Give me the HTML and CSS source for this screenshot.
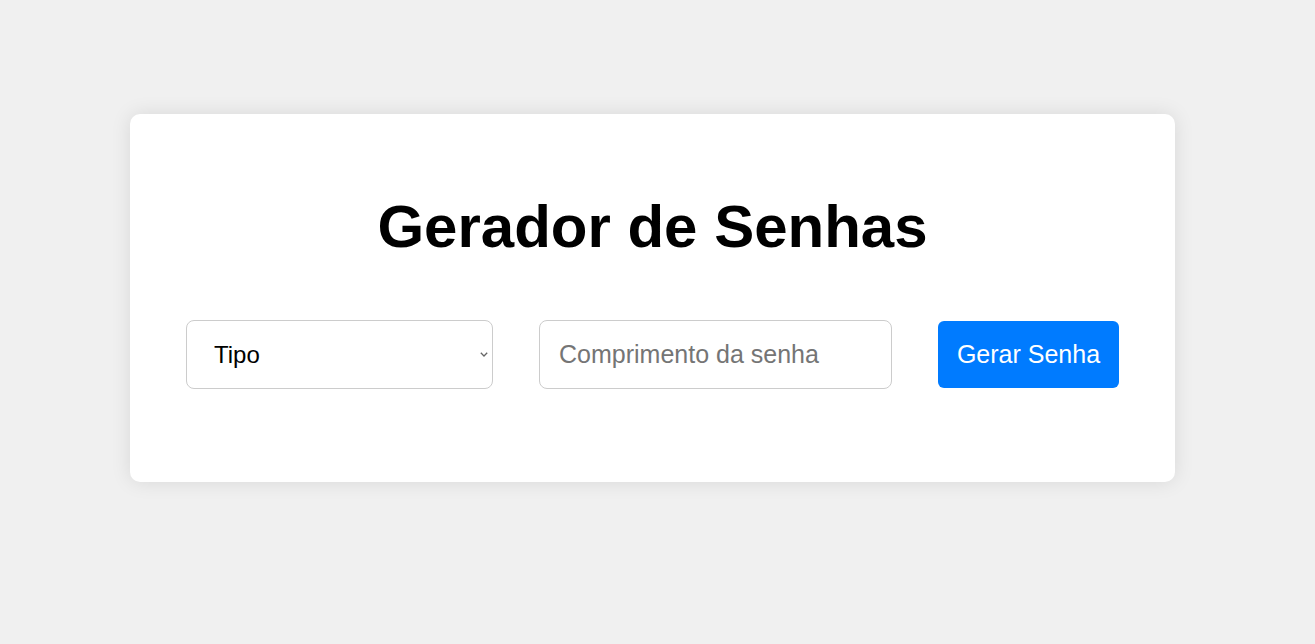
FILE: index.html
```html
<!DOCTYPE html>
<html lang="pt">
<head>
<meta charset="utf-8">
<title>Gerador de Senhas</title>
<link rel="stylesheet" href="styles.css">
</head>
<body>
<div class="card">
  <h1 class="title">Gerador de Senhas</h1>
  <div class="row">
    <div class="select-wrap">
      <select class="select">
        <option>Tipo</option>
      </select>
      <svg class="chevron" width="8" height="5" viewBox="0 0 8 5" aria-hidden="true">
        <path d="M0.8 0.8 L4 4 L7.2 0.8" fill="none" stroke="#666" stroke-width="1.3"/>
      </svg>
    </div>
    <input class="input" type="text" placeholder="Comprimento da senha">
    <button class="btn">Gerar Senha</button>
  </div>
</div>
</body>
</html>
```
FILE: styles.css
```css
html, body {
  margin: 0;
  padding: 0;
}
body {
  background: #f0f0f0;
  font-family: "Liberation Sans", Arial, sans-serif;
  height: 644px;
}
.card {
  box-sizing: border-box;
  width: 1045px;
  height: 368px;
  margin: 114px 0 0 130px;
  background: #fff;
  border-radius: 10px;
  box-shadow: 0 0 20px rgba(0, 0, 0, 0.1);
  padding: 78px 56px 0;
}
.title {
  margin: 0;
  font-size: 60px;
  font-weight: bold;
  line-height: 69px;
  text-align: center;
  color: #000;
}
.row {
  display: flex;
  align-items: center;
  gap: 46px;
  margin-top: 59px;
}
.select-wrap {
  position: relative;
  width: 307px;
  height: 69px;
}
.select {
  box-sizing: border-box;
  -webkit-appearance: none;
  appearance: none;
  width: 307px;
  height: 69px;
  border: 1px solid #ccc;
  border-radius: 8px;
  background: #fff;
  font-family: "Liberation Sans", Arial, sans-serif;
  font-size: 24px;
  color: #000;
  padding: 0 20px 0 27px;
  outline: none;
}
.chevron {
  position: absolute;
  left: 294px;
  top: 32px;
  pointer-events: none;
}
.input {
  box-sizing: border-box;
  width: 353px;
  height: 69px;
  border: 1px solid #ccc;
  border-radius: 8px;
  font-family: "Liberation Sans", Arial, sans-serif;
  font-size: 25px;
  padding: 0 19px;
  color: #000;
}
.input::placeholder {
  color: #757575;
}
.btn {
  box-sizing: border-box;
  width: 181px;
  height: 67px;
  border: none;
  border-radius: 6px;
  background: #007bff;
  color: #fff;
  font-family: "Liberation Sans", Arial, sans-serif;
  font-size: 25px;
  padding: 0;
  cursor: pointer;
}
```
